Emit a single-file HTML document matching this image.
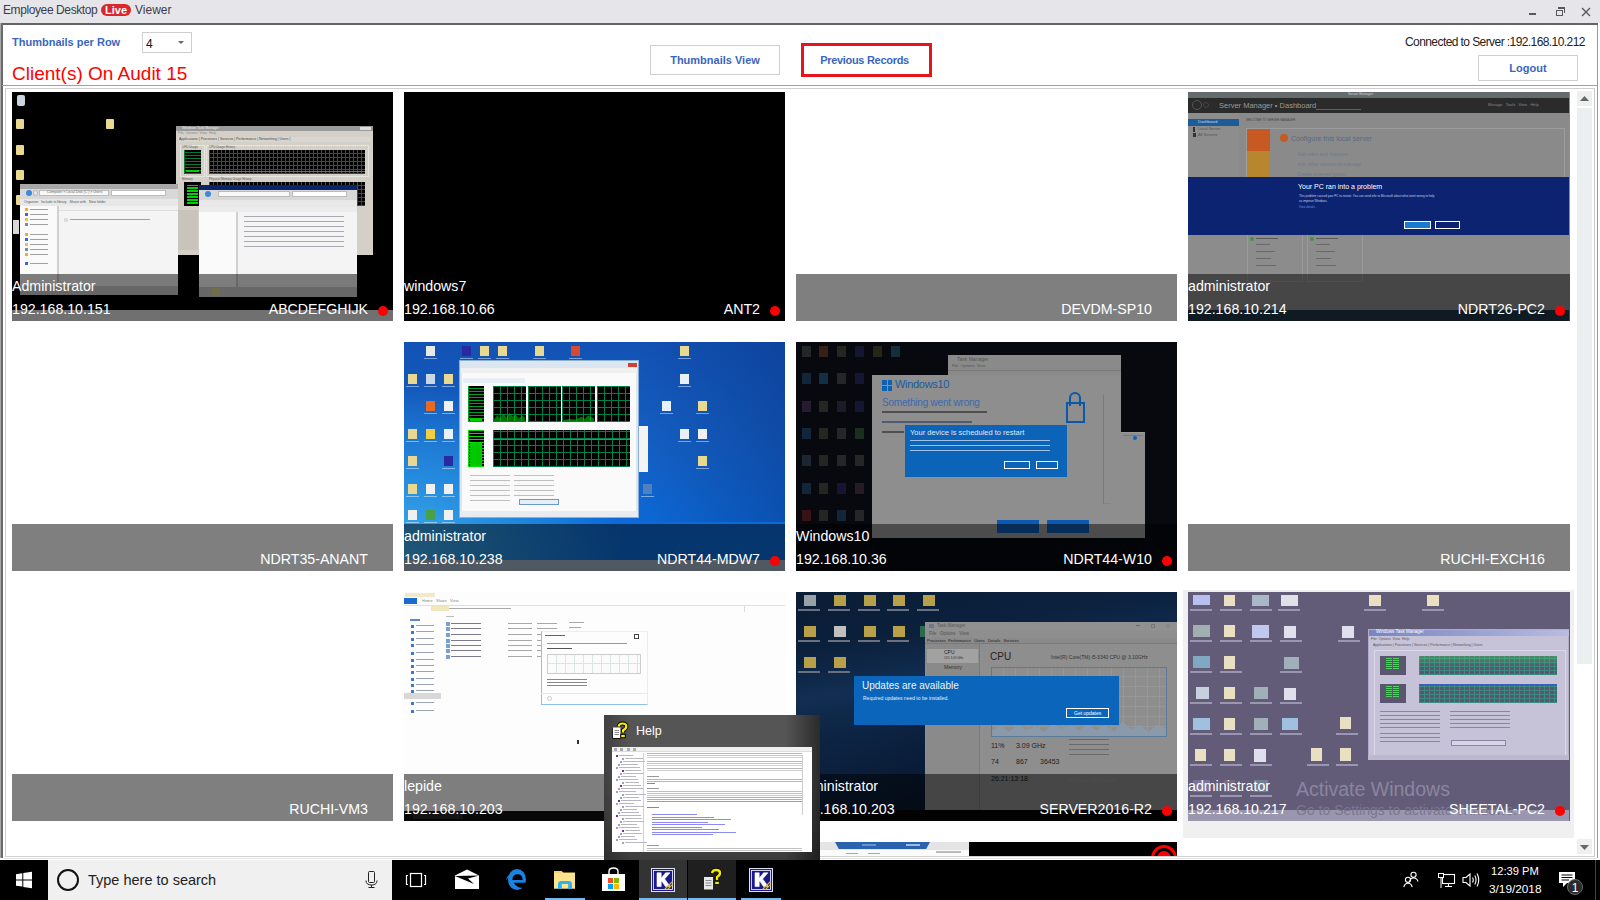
<!DOCTYPE html>
<html><head><meta charset="utf-8">
<style>
*{margin:0;padding:0;box-sizing:border-box}
html,body{width:1600px;height:900px;overflow:hidden;background:#fff;font-family:"Liberation Sans",sans-serif}
.a{position:absolute}
#title{left:0;top:0;width:1600px;height:23px;background:#e6e6ea}
#tline{left:0;top:23px;width:1598px;height:2px;background:#646464}
.ttxt{font-size:12px;letter-spacing:-0.4px;color:#3c3c46;top:3px;white-space:nowrap}
#live{left:101px;top:4px;width:30px;height:12px;border-radius:6px;background:#d9272d;color:#fff;font-weight:bold;font-size:11px;line-height:12px;text-align:center}
.wc{background:#5a5a5a}
#lborder{left:0;top:23px;width:3px;height:835px;background:#6a6a6a;border-left:1px solid #a8a8a8}
#rborder{left:1597px;top:25px;width:1px;height:833px;background:#999}
#bborder{left:3px;top:858px;width:1594px;height:1px;background:#e4e4e4}
.blue{color:#3a66c0;font-weight:bold}
.btn{border:1px solid #cfcfcf;background:#fff;text-align:center}
#hl1{left:2px;top:85px;width:1596px;height:1px;background:#a0a0a0}
#hl2{left:5px;top:88px;width:1590px;height:1px;background:#d0d0d0}
#pl{left:5px;top:88px;width:1px;height:769px;background:#d0d0d0}
#pr{left:1594px;top:88px;width:1px;height:769px;background:#c8c8c8}
#pb{left:5px;top:856px;width:1590px;height:1px;background:#d0d0d0}
.tile{position:absolute;width:381px;height:229px;overflow:hidden;background:#fff}
.band{position:absolute;left:0;top:182px;width:100%;height:47px;background:rgba(0,0,0,.5)}
.lab{position:absolute;color:#fff;font-size:14.2px;white-space:nowrap;line-height:16px}
.u{left:0;top:186px}
.ip{left:0;top:209px}
.hn{right:25px;top:209px}
.dot{position:absolute;right:5px;top:214px;width:10px;height:10px;border-radius:50%;background:#f00}
#taskbar{left:0;top:860px;width:1600px;height:40px;background:#000}
</style></head><body>
<!-- title bar -->
<div id="title" class="a"></div>
<div class="a ttxt" style="left:3px">Employee Desktop</div>
<div id="live" class="a">Live</div>
<div class="a ttxt" style="left:135px;letter-spacing:0">Viewer</div>
<div class="a wc" style="left:1529px;top:13px;width:7px;height:2px"></div>
<div class="a" style="left:1556px;top:10px;width:7px;height:6px;border:1.5px solid #5a5a5a"></div>
<div class="a" style="left:1558px;top:7px;width:7px;height:6px;border-top:2px solid #5a5a5a;border-right:1.5px solid #5a5a5a"></div>
<svg class="a" style="left:1581px;top:7px" width="10" height="10"><path d="M1 1L9 9M9 1L1 9" stroke="#5a5a5a" stroke-width="1.4"/></svg>
<div id="tline" class="a"></div>
<div id="lborder" class="a"></div>
<div id="rborder" class="a"></div>
<div id="bborder" class="a"></div>

<!-- header -->
<div class="a blue" style="left:12px;top:35.5px;font-size:11px;white-space:nowrap">Thumbnails per Row</div>
<div class="a" style="left:142px;top:32px;width:50px;height:21px;border:1px solid #cfcfcf"></div>
<div class="a" style="left:146px;top:37px;font-size:12px;color:#111">4</div>
<svg class="a" style="left:178px;top:41px" width="7" height="4"><path d="M0 0H6L3 3Z" fill="#666"/></svg>
<div class="a" style="left:12px;top:63px;font-size:19px;color:#f00;white-space:nowrap">Client(s) On Audit 15</div>
<div class="a btn blue" style="left:650px;top:45px;width:130px;height:30px;font-size:11px;line-height:28px">Thumbnails View</div>
<div class="a blue" style="left:801px;top:43px;width:131px;height:34px;border:3px solid #e8141c;font-size:11px;letter-spacing:-0.3px;line-height:28px;text-align:center;padding-right:4px">Previous Records</div>
<div class="a" style="left:1405px;top:35px;font-size:12px;letter-spacing:-0.58px;color:#222;white-space:nowrap">Connected to Server :192.168.10.212</div>
<div class="a btn blue" style="left:1478px;top:55px;width:100px;height:26px;font-size:11px;line-height:24px">Logout</div>
<div id="hl1" class="a"></div>
<div id="hl2" class="a"></div>
<div id="pl" class="a"></div>
<div id="pr" class="a"></div>
<div id="pb" class="a"></div>

<!-- scrollbar -->
<div class="a" style="left:1577px;top:91px;width:15px;height:15px;background:#eef0f0"></div>
<svg class="a" style="left:1580px;top:96px" width="10" height="6"><path d="M0 5H9L4.5 0Z" fill="#666"/></svg>
<div class="a" style="left:1577px;top:108px;width:15px;height:556px;background:#eceff0"></div>
<div class="a" style="left:1577px;top:839px;width:15px;height:15px;background:#eef0f0"></div>
<svg class="a" style="left:1580px;top:845px" width="10" height="6"><path d="M0 0H9L4.5 5Z" fill="#666"/></svg>

<!-- selection box -->
<div class="a" style="left:1183px;top:590px;width:391px;height:248px;background:#f0f0f0"></div>

<!-- TILES -->
<div class="tile" style="left:12px;top:92px;background:#000"><div class="a" style="left:5px;top:3px;width:8px;height:11px;background:#c8d4e0;border-radius:2px"></div><div class="a" style="left:4px;top:27px;width:8px;height:10px;background:#e8d890;border-radius:1px"></div><div class="a" style="left:4px;top:53px;width:8px;height:10px;background:#e8d890;border-radius:1px"></div><div class="a" style="left:4px;top:78px;width:8px;height:10px;background:#e8d890;border-radius:1px"></div><div class="a" style="left:4px;top:103px;width:8px;height:10px;background:#e8d890;border-radius:1px"></div><div class="a" style="left:94px;top:27px;width:8px;height:10px;background:#e8d890;border-radius:1px"></div><div class="a" style="left:1px;top:128px;width:6px;height:14px;background:#d8d8d8;"></div><div class="a" style="left:164px;top:34px;width:197px;height:129px;background:#d4d0c8;"></div><div class="a" style="left:164px;top:34px;width:197px;height:5px;background:#9a9a9a;"></div><div class="a" style="left:170px;top:35px;font-size:3.5px;color:#eee;white-space:nowrap;line-height:1;">Windows Task Manager</div><div class="a" style="left:348px;top:35px;width:11px;height:3px;background:#ddd;"></div><div class="a" style="left:166px;top:40px;font-size:3.5px;color:#888;white-space:nowrap;line-height:1;">File&nbsp;&nbsp;Options&nbsp;&nbsp;View&nbsp;&nbsp;Help</div><div class="a" style="left:166px;top:45px;width:193px;height:5px;background:#d8d6d0;"></div><div class="a" style="left:167px;top:46px;font-size:3.5px;color:#444;white-space:nowrap;line-height:1;">Applications | Processes | Services | Performance | Networking | Users |</div><div class="a" style="left:168px;top:53px;width:25px;height:32px;background:transparent;border:1px solid #e8e6e0"></div><div class="a" style="left:194px;top:53px;width:163px;height:32px;background:transparent;border:1px solid #e8e6e0"></div><div class="a" style="left:170px;top:54px;font-size:3px;color:#555;white-space:nowrap;line-height:1;">CPU Usage</div><div class="a" style="left:197px;top:54px;font-size:3px;color:#555;white-space:nowrap;line-height:1;">CPU Usage History</div><div class="a" style="left:170px;top:86px;font-size:3px;color:#555;white-space:nowrap;line-height:1;">Memory</div><div class="a" style="left:197px;top:86px;font-size:3px;color:#555;white-space:nowrap;line-height:1;">Physical Memory Usage History</div><div class="a" style="left:172px;top:58px;width:17px;height:24px;background:#000;background-image:repeating-linear-gradient(90deg,#007a30 0 1px,transparent 1px 17px),repeating-linear-gradient(0deg,#007a30 0 1px,transparent 1px 3px)"></div><div class="a" style="left:174px;top:78px;width:13px;height:2px;background:#00d000;"></div><div class="a" style="left:197px;top:58px;width:156px;height:24px;background:#000;background-image:repeating-linear-gradient(90deg,#007038 0 1px,transparent 1px 4px),repeating-linear-gradient(0deg,#007038 0 1px,transparent 1px 4px)"></div><div class="a" style="left:197px;top:79px;width:156px;height:1px;background:#00c000;"></div><div class="a" style="left:172px;top:90px;width:17px;height:24px;background:#000;"></div><div class="a" style="left:175px;top:93px;width:11px;height:19px;background:#00d000;background-image:repeating-linear-gradient(0deg,#00d000 0 2px,#000 2px 3px)"></div><div class="a" style="left:197px;top:90px;width:156px;height:24px;background:#000;background-image:repeating-linear-gradient(90deg,#007038 0 1px,transparent 1px 4px),repeating-linear-gradient(0deg,#007038 0 1px,transparent 1px 4px)"></div><div class="a" style="left:166px;top:118px;width:20px;height:40px;background:#c8c4bc;"></div><div class="a" style="left:8px;top:92px;width:158px;height:111px;background:#f4f4f4;"></div><div class="a" style="left:8px;top:92px;width:158px;height:5px;background:#a8a8a8;"></div><div class="a" style="left:8px;top:97px;width:158px;height:10px;background:#d8d8d8;"></div><div class="a" style="left:14px;top:98px;width:6px;height:6px;background:#3a8ad8;border-radius:50%"></div><div class="a" style="left:21px;top:98px;width:5px;height:6px;background:#e8e8e8;border-radius:50%;border:1px solid #bbb"></div><div class="a" style="left:27px;top:98px;width:70px;height:6px;background:#f8f8f8;border:1px solid #bbb"></div><div class="a" style="left:35px;top:99px;font-size:3.5px;color:#666;white-space:nowrap;line-height:1;">Computer &gt; Local Disk (C:) &gt; Users</div><div class="a" style="left:99px;top:98px;width:55px;height:6px;background:#fff;border:1px solid #bbb"></div><div class="a" style="left:8px;top:107px;width:158px;height:7px;background:#e8e8e8;"></div><div class="a" style="left:12px;top:109px;font-size:3.5px;color:#555;white-space:nowrap;line-height:1;">Organize&nbsp;&nbsp;&nbsp;Include in library&nbsp;&nbsp;&nbsp;Share with&nbsp;&nbsp;&nbsp;New folder</div><div class="a" style="left:8px;top:114px;width:37px;height:80px;background:#fafafa;"></div><div class="a" style="left:45px;top:114px;width:2px;height:80px;background:#d0d0d0;"></div><div class="a" style="left:47px;top:114px;width:119px;height:5px;background:#f0f0f0;border-bottom:1px solid #ddd"></div><div class="a" style="left:13px;top:116px;width:3px;height:3px;background:#e8b030;"></div><div class="a" style="left:18px;top:117px;width:18px;height:1px;background:#a0a0a0;"></div><div class="a" style="left:13px;top:121px;width:3px;height:3px;background:#3a6ad0;"></div><div class="a" style="left:18px;top:122px;width:18px;height:1px;background:#a0a0a0;"></div><div class="a" style="left:13px;top:126px;width:3px;height:3px;background:#e0c060;"></div><div class="a" style="left:18px;top:127px;width:18px;height:1px;background:#a0a0a0;"></div><div class="a" style="left:13px;top:131px;width:3px;height:3px;background:#7a8aa0;"></div><div class="a" style="left:18px;top:132px;width:18px;height:1px;background:#a0a0a0;"></div><div class="a" style="left:13px;top:141px;width:3px;height:3px;background:#e8b030;"></div><div class="a" style="left:18px;top:142px;width:18px;height:1px;background:#a0a0a0;"></div><div class="a" style="left:13px;top:146px;width:3px;height:3px;background:#3a6ad0;"></div><div class="a" style="left:18px;top:147px;width:18px;height:1px;background:#a0a0a0;"></div><div class="a" style="left:13px;top:151px;width:3px;height:3px;background:#e0c060;"></div><div class="a" style="left:18px;top:152px;width:18px;height:1px;background:#a0a0a0;"></div><div class="a" style="left:13px;top:156px;width:3px;height:3px;background:#7a8aa0;"></div><div class="a" style="left:18px;top:157px;width:18px;height:1px;background:#a0a0a0;"></div><div class="a" style="left:13px;top:161px;width:3px;height:3px;background:#e8b030;"></div><div class="a" style="left:18px;top:162px;width:18px;height:1px;background:#a0a0a0;"></div><div class="a" style="left:13px;top:170px;width:3px;height:3px;background:#3a6ad0;"></div><div class="a" style="left:18px;top:171px;width:18px;height:1px;background:#a0a0a0;"></div><div class="a" style="left:52px;top:126px;width:4px;height:4px;background:#ddd;"></div><div class="a" style="left:58px;top:127px;width:60px;height:1px;background:#a0a0a0;"></div><div class="a" style="left:118px;top:127px;width:20px;height:1px;background:#a0a0a0;"></div><div class="a" style="left:8px;top:194px;width:158px;height:9px;background:#cfcfcf;"></div><div class="a" style="left:187px;top:93px;width:158px;height:112px;background:#f4f4f4;"></div><div class="a" style="left:187px;top:93px;width:158px;height:5px;background:#0a246a;"></div><div class="a" style="left:187px;top:98px;width:158px;height:10px;background:#d8d8d8;"></div><div class="a" style="left:193px;top:99px;width:6px;height:6px;background:#3a8ad8;border-radius:50%"></div><div class="a" style="left:206px;top:99px;width:72px;height:6px;background:#f8f8f8;border:1px solid #bbb"></div><div class="a" style="left:280px;top:99px;width:55px;height:6px;background:#fff;border:1px solid #bbb"></div><div class="a" style="left:187px;top:108px;width:158px;height:7px;background:#e8e8e8;"></div><div class="a" style="left:187px;top:115px;width:37px;height:80px;background:#fafafa;"></div><div class="a" style="left:224px;top:115px;width:2px;height:80px;background:#d0d0d0;"></div><div class="a" style="left:187px;top:115px;width:158px;height:5px;background:#ececec;"></div><div class="a" style="left:232px;top:124px;width:100px;height:1px;background:#a8a8b0;"></div><div class="a" style="left:232px;top:129px;width:100px;height:1px;background:#a8a8b0;"></div><div class="a" style="left:232px;top:134px;width:100px;height:1px;background:#a8a8b0;"></div><div class="a" style="left:232px;top:139px;width:100px;height:1px;background:#a8a8b0;"></div><div class="a" style="left:232px;top:144px;width:100px;height:1px;background:#a8a8b0;"></div><div class="a" style="left:232px;top:149px;width:100px;height:1px;background:#a8a8b0;"></div><div class="a" style="left:232px;top:154px;width:100px;height:1px;background:#a8a8b0;"></div><div class="a" style="left:187px;top:195px;width:158px;height:10px;background:#cfcfcf;"></div><div class="a" style="left:200px;top:196px;width:8px;height:8px;background:#e8d890;"></div><div class="a" style="left:0px;top:218px;width:381px;height:11px;background:#e0e0e0;"></div><div class="band"></div><div class="lab u">Administrator</div><div class="lab ip">192.168.10.151</div><div class="lab hn">ABCDEFGHIJK</div><div class="dot"></div></div>
<div class="tile" style="left:404px;top:92px;background:#000"><div class="band"></div><div class="lab u">windows7</div><div class="lab ip">192.168.10.66</div><div class="lab hn">ANT2</div><div class="dot"></div></div>
<div class="tile" style="left:796px;top:92px;background:#fff"><div class="band"></div><div class="lab hn">DEVDM-SP10</div></div>
<div class="tile" style="left:1188px;top:92px;width:382px;background:#8c8c8c"><div class="a" style="left:0px;top:0px;width:381px;height:6px;background:#646c6e;"></div><div class="a" style="left:0px;top:6px;width:381px;height:15px;background:#2b2b2b;"></div><div class="a" style="left:4px;top:8px;width:10px;height:10px;background:transparent;border:1px solid #555;border-radius:50%"></div><div class="a" style="left:15px;top:10px;width:6px;height:6px;background:transparent;border:1px solid #444;border-radius:50%"></div><div class="a" style="left:31px;top:10px;font-size:7.5px;color:#9a9a9a;white-space:nowrap;line-height:1;">Server Manager • Dashboard</div><div class="a" style="left:300px;top:11px;font-size:4px;color:#888;white-space:nowrap;line-height:1;">Manage&nbsp;&nbsp;&nbsp;Tools&nbsp;&nbsp;&nbsp;View&nbsp;&nbsp;&nbsp;Help</div><div class="a" style="left:128px;top:17px;width:45px;height:1px;background:#3a6a90;"></div><div class="a" style="left:0px;top:21px;width:51px;height:122px;background:#8d8d8d;"></div><div class="a" style="left:51px;top:21px;width:330px;height:122px;background:#8a8a8a;"></div><div class="a" style="left:0px;top:27px;width:51px;height:7px;background:#1d5c98;"></div><div class="a" style="left:10px;top:28px;font-size:4px;color:#c8d8e8;white-space:nowrap;line-height:1;">Dashboard</div><div class="a" style="left:10px;top:35px;font-size:4px;color:#555;white-space:nowrap;line-height:1;">Local Server</div><div class="a" style="left:10px;top:41px;font-size:4px;color:#555;white-space:nowrap;line-height:1;">All Servers</div><div class="a" style="left:5px;top:35px;width:2px;height:5px;background:#333;"></div><div class="a" style="left:5px;top:41px;width:3px;height:4px;background:#333;"></div><div class="a" style="left:58px;top:27px;font-size:3px;color:#444;white-space:nowrap;line-height:1;">WELCOME TO SERVER MANAGER</div><div class="a" style="left:58px;top:36px;width:319px;height:1px;background:#9c9c9c;"></div><div class="a" style="left:58px;top:36px;width:24px;height:23px;background:#c65a22;"></div><div class="a" style="left:58px;top:59px;width:24px;height:26px;background:#b8862e;"></div><div class="a" style="left:92px;top:42px;width:8px;height:8px;background:#c65a22;border-radius:50%"></div><div class="a" style="left:103px;top:43px;font-size:7px;color:#5a6a80;white-space:nowrap;line-height:1;">Configure this local server</div><div class="a" style="left:109px;top:60px;font-size:5px;color:#6a7a90;white-space:nowrap;line-height:1;">Add roles and features</div><div class="a" style="left:109px;top:70px;font-size:5px;color:#6a7a90;white-space:nowrap;line-height:1;">Add other servers to manage</div><div class="a" style="left:109px;top:80px;font-size:5px;color:#6a7a90;white-space:nowrap;line-height:1;">Create a server group</div><div class="a" style="left:0px;top:85px;width:381px;height:58px;background:#0b2370;"></div><div class="a" style="left:110px;top:91px;font-size:7px;color:#fff;white-space:nowrap;line-height:1;">Your PC ran into a problem</div><div class="a" style="left:111px;top:103px;font-size:3px;color:#c8d0e8;white-space:nowrap;line-height:1;">This problem caused your PC to restart. You can send info to Microsoft about what went wrong to help</div><div class="a" style="left:111px;top:108px;font-size:3px;color:#c8d0e8;white-space:nowrap;line-height:1;">us improve Windows.</div><div class="a" style="left:111px;top:114px;font-size:3px;color:#6a90e0;white-space:nowrap;line-height:1;">View details</div><div class="a" style="left:216px;top:129px;width:27px;height:8px;background:#1a7ad0;border:1px solid #fff"></div><div class="a" style="left:247px;top:129px;width:25px;height:8px;background:transparent;border:1px solid #fff"></div><div class="a" style="left:59px;top:143px;width:56px;height:47px;background:transparent;border:1px solid #9a9a9a;border-top:none"></div><div class="a" style="left:119px;top:143px;width:56px;height:47px;background:transparent;border:1px solid #9a9a9a;border-top:none"></div><div class="a" style="left:62px;top:145px;width:4px;height:4px;background:#3a9a3a;border-radius:50%"></div><div class="a" style="left:68px;top:146px;width:22px;height:1px;background:#5a5a5a;"></div><div class="a" style="left:68px;top:152px;width:14px;height:1px;background:#6a6a6a;"></div><div class="a" style="left:68px;top:159px;width:19px;height:1px;background:#6a6a6a;"></div><div class="a" style="left:68px;top:166px;width:15px;height:1px;background:#6a6a6a;"></div><div class="a" style="left:68px;top:173px;width:20px;height:1px;background:#6a6a6a;"></div><div class="a" style="left:122px;top:145px;width:4px;height:4px;background:#3a9a3a;border-radius:50%"></div><div class="a" style="left:128px;top:146px;width:22px;height:1px;background:#5a5a5a;"></div><div class="a" style="left:128px;top:152px;width:14px;height:1px;background:#6a6a6a;"></div><div class="a" style="left:128px;top:159px;width:19px;height:1px;background:#6a6a6a;"></div><div class="a" style="left:128px;top:166px;width:15px;height:1px;background:#6a6a6a;"></div><div class="a" style="left:128px;top:173px;width:20px;height:1px;background:#6a6a6a;"></div><div class="a" style="left:58px;top:36px;width:319px;height:49px;background:transparent;border:1px solid #9c9c9c;border-bottom:none"></div><div class="a" style="left:160px;top:1px;font-size:3.5px;color:#cfd4d6;white-space:nowrap;line-height:1;">Server Manager</div><div class="a" style="left:0px;top:218px;width:381px;height:11px;background:#1e3444;"></div><div class="band"></div><div class="lab u">administrator</div><div class="lab ip">192.168.10.214</div><div class="lab hn">NDRT26-PC2</div><div class="dot"></div></div>
<div class="tile" style="left:12px;top:342px;background:#fff"><div class="band"></div><div class="lab hn">NDRT35-ANANT</div></div>
<div class="tile" style="left:404px;top:342px;background:#1f6bd0"><div class="a" style="left:0px;top:0px;width:381px;height:229px;background:#1a62c8;background:radial-gradient(ellipse 220px 170px at 0px 215px,#40b0f0 0%,#2890e0 40%,transparent 100%),linear-gradient(180deg,#1252b4 0%,#1460c4 45%,#0c6ad8 80%,#0a70e0 100%)"></div><div class="a" style="left:230px;top:0px;width:151px;height:180px;background:transparent;background:linear-gradient(90deg,transparent,rgba(8,50,130,.45) 100%)"></div><div class="a" style="left:22px;top:4px;width:9px;height:10px;background:#e8e8e8;"></div><div class="a" style="left:20px;top:16px;width:13px;height:1px;background:rgba(255,255,255,.45);"></div><div class="a" style="left:58px;top:4px;width:9px;height:10px;background:#2a2aa0;"></div><div class="a" style="left:56px;top:16px;width:13px;height:1px;background:rgba(255,255,255,.45);"></div><div class="a" style="left:76px;top:4px;width:9px;height:10px;background:#e8d890;"></div><div class="a" style="left:74px;top:16px;width:13px;height:1px;background:rgba(255,255,255,.45);"></div><div class="a" style="left:94px;top:4px;width:9px;height:10px;background:#e8d890;"></div><div class="a" style="left:92px;top:16px;width:13px;height:1px;background:rgba(255,255,255,.45);"></div><div class="a" style="left:131px;top:4px;width:9px;height:10px;background:#e8d890;"></div><div class="a" style="left:129px;top:16px;width:13px;height:1px;background:rgba(255,255,255,.45);"></div><div class="a" style="left:167px;top:4px;width:9px;height:10px;background:#d84a30;"></div><div class="a" style="left:165px;top:16px;width:13px;height:1px;background:rgba(255,255,255,.45);"></div><div class="a" style="left:276px;top:4px;width:9px;height:10px;background:#e8d890;"></div><div class="a" style="left:274px;top:16px;width:13px;height:1px;background:rgba(255,255,255,.45);"></div><div class="a" style="left:4px;top:32px;width:9px;height:10px;background:#e8d890;"></div><div class="a" style="left:2px;top:44px;width:13px;height:1px;background:rgba(255,255,255,.45);"></div><div class="a" style="left:22px;top:32px;width:9px;height:10px;background:#c8d8e8;"></div><div class="a" style="left:20px;top:44px;width:13px;height:1px;background:rgba(255,255,255,.45);"></div><div class="a" style="left:40px;top:32px;width:9px;height:10px;background:#e8d890;"></div><div class="a" style="left:38px;top:44px;width:13px;height:1px;background:rgba(255,255,255,.45);"></div><div class="a" style="left:276px;top:32px;width:9px;height:10px;background:#e8f0f8;"></div><div class="a" style="left:274px;top:44px;width:13px;height:1px;background:rgba(255,255,255,.45);"></div><div class="a" style="left:22px;top:59px;width:9px;height:10px;background:#e86a20;"></div><div class="a" style="left:20px;top:71px;width:13px;height:1px;background:rgba(255,255,255,.45);"></div><div class="a" style="left:40px;top:59px;width:9px;height:10px;background:#f0f0f0;"></div><div class="a" style="left:38px;top:71px;width:13px;height:1px;background:rgba(255,255,255,.45);"></div><div class="a" style="left:258px;top:59px;width:9px;height:10px;background:#e8f0f8;"></div><div class="a" style="left:256px;top:71px;width:13px;height:1px;background:rgba(255,255,255,.45);"></div><div class="a" style="left:294px;top:59px;width:9px;height:10px;background:#e8d890;"></div><div class="a" style="left:292px;top:71px;width:13px;height:1px;background:rgba(255,255,255,.45);"></div><div class="a" style="left:4px;top:87px;width:9px;height:10px;background:#e8d890;"></div><div class="a" style="left:2px;top:99px;width:13px;height:1px;background:rgba(255,255,255,.45);"></div><div class="a" style="left:22px;top:87px;width:9px;height:10px;background:#f0d040;"></div><div class="a" style="left:20px;top:99px;width:13px;height:1px;background:rgba(255,255,255,.45);"></div><div class="a" style="left:40px;top:87px;width:9px;height:10px;background:#e8f0f8;"></div><div class="a" style="left:38px;top:99px;width:13px;height:1px;background:rgba(255,255,255,.45);"></div><div class="a" style="left:276px;top:87px;width:9px;height:10px;background:#e8f0f8;"></div><div class="a" style="left:274px;top:99px;width:13px;height:1px;background:rgba(255,255,255,.45);"></div><div class="a" style="left:294px;top:87px;width:9px;height:10px;background:#f0f0f0;"></div><div class="a" style="left:292px;top:99px;width:13px;height:1px;background:rgba(255,255,255,.45);"></div><div class="a" style="left:4px;top:114px;width:9px;height:10px;background:#e8d890;"></div><div class="a" style="left:2px;top:126px;width:13px;height:1px;background:rgba(255,255,255,.45);"></div><div class="a" style="left:40px;top:114px;width:9px;height:10px;background:#2a2aa0;"></div><div class="a" style="left:38px;top:126px;width:13px;height:1px;background:rgba(255,255,255,.45);"></div><div class="a" style="left:294px;top:114px;width:9px;height:10px;background:#e8d890;"></div><div class="a" style="left:292px;top:126px;width:13px;height:1px;background:rgba(255,255,255,.45);"></div><div class="a" style="left:4px;top:142px;width:9px;height:10px;background:#e8d890;"></div><div class="a" style="left:2px;top:154px;width:13px;height:1px;background:rgba(255,255,255,.45);"></div><div class="a" style="left:22px;top:142px;width:9px;height:10px;background:#f0f0f0;"></div><div class="a" style="left:20px;top:154px;width:13px;height:1px;background:rgba(255,255,255,.45);"></div><div class="a" style="left:40px;top:142px;width:9px;height:10px;background:#f0f0f0;"></div><div class="a" style="left:38px;top:154px;width:13px;height:1px;background:rgba(255,255,255,.45);"></div><div class="a" style="left:239px;top:142px;width:9px;height:10px;background:#5080c0;"></div><div class="a" style="left:237px;top:154px;width:13px;height:1px;background:rgba(255,255,255,.45);"></div><div class="a" style="left:4px;top:168px;width:9px;height:10px;background:#f0f0f0;"></div><div class="a" style="left:2px;top:180px;width:13px;height:1px;background:rgba(255,255,255,.45);"></div><div class="a" style="left:22px;top:168px;width:9px;height:10px;background:#48a048;"></div><div class="a" style="left:20px;top:180px;width:13px;height:1px;background:rgba(255,255,255,.45);"></div><div class="a" style="left:40px;top:168px;width:9px;height:10px;background:#f0f0f0;"></div><div class="a" style="left:38px;top:180px;width:13px;height:1px;background:rgba(255,255,255,.45);"></div><div class="a" style="left:55px;top:18px;width:180px;height:158px;background:#dce6f0;border:1px solid #8ab0d8"></div><div class="a" style="left:57px;top:26px;width:176px;height:5px;background:#f0f0f0;"></div><div class="a" style="left:224px;top:21px;width:9px;height:4px;background:#d04030;"></div><div class="a" style="left:58px;top:31px;width:174px;height:140px;background:#fafafa;"></div><div class="a" style="left:59px;top:36px;width:62px;height:5px;background:#e8eef6;"></div><div class="a" style="left:64px;top:44px;width:16px;height:36px;background:#000;background-image:repeating-linear-gradient(90deg,#00a020 0 1px,transparent 1px 16px),repeating-linear-gradient(0deg,#00a020 0 1px,transparent 1px 3px)"></div><div class="a" style="left:66px;top:76px;width:12px;height:3px;background:#00d000;"></div><div class="a" style="left:89px;top:44px;width:33px;height:36px;background:#000;background-image:repeating-linear-gradient(90deg,#00804a 0 1px,transparent 1px 7px),repeating-linear-gradient(0deg,#00804a 0 1px,transparent 1px 7px)"></div><div class="a" style="left:124px;top:44px;width:33px;height:36px;background:#000;background-image:repeating-linear-gradient(90deg,#00804a 0 1px,transparent 1px 7px),repeating-linear-gradient(0deg,#00804a 0 1px,transparent 1px 7px)"></div><div class="a" style="left:158px;top:44px;width:33px;height:36px;background:#000;background-image:repeating-linear-gradient(90deg,#00804a 0 1px,transparent 1px 7px),repeating-linear-gradient(0deg,#00804a 0 1px,transparent 1px 7px)"></div><div class="a" style="left:193px;top:44px;width:33px;height:36px;background:#000;background-image:repeating-linear-gradient(90deg,#00804a 0 1px,transparent 1px 7px),repeating-linear-gradient(0deg,#00804a 0 1px,transparent 1px 7px)"></div><div class="a" style="left:90px;top:70px;width:31px;height:9px;background:#00c000;clip-path:polygon(0 80%,10% 40%,20% 70%,30% 20%,40% 60%,50% 10%,60% 50%,70% 30%,80% 70%,90% 40%,100% 60%,100% 100%,0 100%);opacity:.6"></div><div class="a" style="left:159px;top:72px;width:31px;height:7px;background:#00c000;clip-path:polygon(0 90%,20% 70%,40% 80%,60% 40%,70% 70%,80% 20%,100% 60%,100% 100%,0 100%);opacity:.6"></div><div class="a" style="left:64px;top:88px;width:16px;height:37px;background:#000;background-image:repeating-linear-gradient(90deg,#00e000 0 1px,transparent 1px 16px),repeating-linear-gradient(0deg,#00e000 0 1px,transparent 1px 3px)"></div><div class="a" style="left:66px;top:101px;width:12px;height:23px;background:#00c800;"></div><div class="a" style="left:89px;top:88px;width:137px;height:37px;background:#000;background-image:repeating-linear-gradient(90deg,#00804a 0 1px,transparent 1px 7px),repeating-linear-gradient(0deg,#00804a 0 1px,transparent 1px 7px)"></div><div class="a" style="left:89px;top:97px;width:137px;height:1px;background:#2080ff;"></div><div class="a" style="left:66px;top:133px;width:40px;height:1px;background:#c0c0c0;"></div><div class="a" style="left:66px;top:138px;width:40px;height:1px;background:#c0c0c0;"></div><div class="a" style="left:66px;top:143px;width:40px;height:1px;background:#c0c0c0;"></div><div class="a" style="left:66px;top:148px;width:40px;height:1px;background:#c0c0c0;"></div><div class="a" style="left:66px;top:153px;width:40px;height:1px;background:#c0c0c0;"></div><div class="a" style="left:66px;top:158px;width:40px;height:1px;background:#c0c0c0;"></div><div class="a" style="left:110px;top:133px;width:40px;height:1px;background:#c0c0c0;"></div><div class="a" style="left:110px;top:138px;width:40px;height:1px;background:#c0c0c0;"></div><div class="a" style="left:110px;top:143px;width:40px;height:1px;background:#c0c0c0;"></div><div class="a" style="left:110px;top:148px;width:40px;height:1px;background:#c0c0c0;"></div><div class="a" style="left:110px;top:153px;width:40px;height:1px;background:#c0c0c0;"></div><div class="a" style="left:115px;top:157px;width:40px;height:6px;background:#e8eef6;border:1px solid #6a9ad0"></div><div class="a" style="left:56px;top:169px;width:178px;height:6px;background:#e8ecf0;"></div><div class="a" style="left:235px;top:84px;width:9px;height:46px;background:#f4f4f4;"></div><div class="a" style="left:0px;top:218px;width:381px;height:11px;background:#a0b0c4;"></div><div class="band"></div><div class="lab u">administrator</div><div class="lab ip">192.168.10.238</div><div class="lab hn">NDRT44-MDW7</div><div class="dot"></div></div>
<div class="tile" style="left:796px;top:342px;background:#080c14"><div class="a" style="left:0px;top:0px;width:381px;height:229px;background:#07090e;"></div><div class="a" style="left:6px;top:4px;width:9px;height:11px;background:#3a3a3a;opacity:.6"></div><div class="a" style="left:23px;top:4px;width:9px;height:11px;background:#5a3020;opacity:.6"></div><div class="a" style="left:41px;top:4px;width:9px;height:11px;background:#3a3a30;opacity:.6"></div><div class="a" style="left:59px;top:4px;width:9px;height:11px;background:#20204a;opacity:.6"></div><div class="a" style="left:77px;top:4px;width:9px;height:11px;background:#3a3a20;opacity:.6"></div><div class="a" style="left:95px;top:4px;width:9px;height:11px;background:#1a4a5a;opacity:.6"></div><div class="a" style="left:6px;top:31px;width:9px;height:11px;background:#1a3a5a;opacity:.6"></div><div class="a" style="left:23px;top:31px;width:9px;height:11px;background:#1a4a6a;opacity:.6"></div><div class="a" style="left:41px;top:31px;width:9px;height:11px;background:#3a3a3a;opacity:.6"></div><div class="a" style="left:59px;top:31px;width:9px;height:11px;background:#20204a;opacity:.6"></div><div class="a" style="left:6px;top:59px;width:9px;height:11px;background:#3a2a4a;opacity:.6"></div><div class="a" style="left:23px;top:59px;width:9px;height:11px;background:#3a3a30;opacity:.6"></div><div class="a" style="left:41px;top:59px;width:9px;height:11px;background:#2a2a3a;opacity:.6"></div><div class="a" style="left:59px;top:59px;width:9px;height:11px;background:#20204a;opacity:.6"></div><div class="a" style="left:6px;top:86px;width:9px;height:11px;background:#1a3a5a;opacity:.6"></div><div class="a" style="left:23px;top:86px;width:9px;height:11px;background:#3a3a30;opacity:.6"></div><div class="a" style="left:41px;top:86px;width:9px;height:11px;background:#3a3a3a;opacity:.6"></div><div class="a" style="left:59px;top:86px;width:9px;height:11px;background:#2a4a2a;opacity:.6"></div><div class="a" style="left:6px;top:113px;width:9px;height:11px;background:#2a3a4a;opacity:.6"></div><div class="a" style="left:23px;top:113px;width:9px;height:11px;background:#3a3a30;opacity:.6"></div><div class="a" style="left:41px;top:113px;width:9px;height:11px;background:#3a3a3a;opacity:.6"></div><div class="a" style="left:59px;top:113px;width:9px;height:11px;background:#3a3a3a;opacity:.6"></div><div class="a" style="left:6px;top:141px;width:9px;height:11px;background:#1a3a5a;opacity:.6"></div><div class="a" style="left:23px;top:141px;width:9px;height:11px;background:#3a3a30;opacity:.6"></div><div class="a" style="left:41px;top:141px;width:9px;height:11px;background:#20204a;opacity:.6"></div><div class="a" style="left:59px;top:141px;width:9px;height:11px;background:#3a2a3a;opacity:.6"></div><div class="a" style="left:6px;top:168px;width:9px;height:11px;background:#5a1a1a;opacity:.6"></div><div class="a" style="left:23px;top:168px;width:9px;height:11px;background:#3a3a30;opacity:.6"></div><div class="a" style="left:41px;top:168px;width:9px;height:11px;background:#1a3a5a;opacity:.6"></div><div class="a" style="left:59px;top:168px;width:9px;height:11px;background:#3a3a3a;opacity:.6"></div><div class="a" style="left:152px;top:13px;width:173px;height:151px;background:#8a8a8a;"></div><div class="a" style="left:152px;top:28px;width:173px;height:1px;background:#7a7a7a;"></div><div class="a" style="left:161px;top:15px;font-size:5px;color:#555;white-space:nowrap;line-height:1;">Task Manager</div><div class="a" style="left:156px;top:22px;font-size:4px;color:#555;white-space:nowrap;line-height:1;">File&nbsp;&nbsp;Options&nbsp;&nbsp;View</div><div class="a" style="left:324px;top:91px;width:25px;height:105px;background:#8c8c8c;"></div><div class="a" style="left:76px;top:33px;width:273px;height:149px;background:#8e8e8e;"></div><div class="a" style="left:86px;top:38px;width:10px;height:11px;background:#1060b0;"></div><div class="a" style="left:91px;top:38px;width:1px;height:11px;background:#8e8e8e;"></div><div class="a" style="left:86px;top:43px;width:10px;height:1px;background:#8e8e8e;"></div><div class="a" style="left:99px;top:37px;font-size:11px;color:#1a5aa0;white-space:nowrap;line-height:1;letter-spacing:-.3px">Windows10</div><div class="a" style="left:86px;top:56px;font-size:10px;color:#3a6ab0;white-space:nowrap;line-height:1;letter-spacing:-.2px">Something went wrong</div><div class="a" style="left:86px;top:69px;width:105px;height:2px;background:#404040;opacity:.8"></div><div class="a" style="left:86px;top:79px;width:90px;height:2px;background:#505a70;"></div><div class="a" style="left:86px;top:89px;width:22px;height:2px;background:#505050;"></div><div class="a" style="left:270px;top:60px;width:19px;height:21px;background:transparent;border:2px solid #0a58a8"></div><div class="a" style="left:273px;top:50px;width:12px;height:14px;background:transparent;border:2px solid #0a58a8;border-bottom:none;border-radius:6px 6px 0 0"></div><div class="a" style="left:307px;top:53px;width:8px;height:109px;background:transparent;border-left:1px solid #6a8a4a;border-bottom:1px solid #6a9a4a"></div><div class="a" style="left:325px;top:33px;width:25px;height:57px;background:#07090e;"></div><div class="a" style="left:325px;top:90px;width:24px;height:1px;background:#9a9a9a;"></div><div class="a" style="left:327px;top:93px;width:20px;height:1px;background:#7a7a7a;"></div><div class="a" style="left:337px;top:94px;width:4px;height:4px;background:#1060c0;border-radius:50%"></div><div class="a" style="left:76px;top:182px;width:273px;height:14px;background:#989898;"></div><div class="a" style="left:201px;top:178px;width:42px;height:13px;background:#0b5ab0;"></div><div class="a" style="left:251px;top:178px;width:42px;height:13px;background:#0b5ab0;"></div><div class="a" style="left:109px;top:83px;width:162px;height:52px;background:#0b64b8;"></div><div class="a" style="left:114px;top:87px;font-size:7.5px;color:#e0e8f0;white-space:nowrap;line-height:1;">Your device is scheduled to restart</div><div class="a" style="left:114px;top:98px;width:140px;height:1px;background:#a0c0e8;"></div><div class="a" style="left:114px;top:103px;width:140px;height:1px;background:#a0c0e8;"></div><div class="a" style="left:114px;top:108px;width:140px;height:1px;background:#a0c0e8;"></div><div class="a" style="left:208px;top:119px;width:26px;height:8px;background:transparent;border:1px solid #fff"></div><div class="a" style="left:240px;top:119px;width:22px;height:8px;background:transparent;border:1px solid #fff"></div><div class="band"></div><div class="lab u">Windows10</div><div class="lab ip">192.168.10.36</div><div class="lab hn">NDRT44-W10</div><div class="dot"></div></div>
<div class="tile" style="left:1188px;top:342px;width:382px;background:#fff"><div class="band"></div><div class="lab hn">RUCHI-EXCH16</div></div>
<div class="tile" style="left:12px;top:592px;background:#fff"><div class="band"></div><div class="lab hn">RUCHI-VM3</div></div>
<div class="tile" style="left:404px;top:592px;background:#fff"><div class="a" style="left:0px;top:0px;width:381px;height:229px;background:#fdfdfd;"></div><div class="a" style="left:1px;top:1px;width:30px;height:4px;background:#e8d890;opacity:.5"></div><div class="a" style="left:0px;top:6px;width:13px;height:6px;background:#1a6ad0;"></div><div class="a" style="left:18px;top:7px;font-size:4px;color:#888;white-space:nowrap;line-height:1;">Home&nbsp;&nbsp;&nbsp;Share&nbsp;&nbsp;&nbsp;View</div><div class="a" style="left:0px;top:13px;width:381px;height:1px;background:#e0e0e0;"></div><div class="a" style="left:27px;top:14px;width:18px;height:5px;background:#e8d890;opacity:.6"></div><div class="a" style="left:45px;top:16px;width:62px;height:1px;background:#aaa;"></div><div class="a" style="left:340px;top:14px;width:41px;height:6px;background:transparent;border-left:1px solid #ddd"></div><div class="a" style="left:6px;top:27px;width:10px;height:2px;background:#5a8ad0;"></div><div class="a" style="left:7px;top:33px;width:3px;height:3px;background:#3a7ad0;"></div><div class="a" style="left:12px;top:33px;width:18px;height:1px;background:#9aa4b4;"></div><div class="a" style="left:7px;top:39px;width:3px;height:3px;background:#3a7ad0;"></div><div class="a" style="left:12px;top:39px;width:18px;height:1px;background:#9aa4b4;"></div><div class="a" style="left:7px;top:46px;width:3px;height:3px;background:#3a7ad0;"></div><div class="a" style="left:12px;top:46px;width:18px;height:1px;background:#9aa4b4;"></div><div class="a" style="left:7px;top:52px;width:3px;height:3px;background:#3a7ad0;"></div><div class="a" style="left:12px;top:52px;width:18px;height:1px;background:#9aa4b4;"></div><div class="a" style="left:7px;top:60px;width:3px;height:3px;background:#3a7ad0;"></div><div class="a" style="left:12px;top:60px;width:18px;height:1px;background:#9aa4b4;"></div><div class="a" style="left:7px;top:67px;width:3px;height:3px;background:#3a7ad0;"></div><div class="a" style="left:12px;top:67px;width:18px;height:1px;background:#9aa4b4;"></div><div class="a" style="left:7px;top:73px;width:3px;height:3px;background:#3a7ad0;"></div><div class="a" style="left:12px;top:73px;width:18px;height:1px;background:#9aa4b4;"></div><div class="a" style="left:7px;top:79px;width:3px;height:3px;background:#3a7ad0;"></div><div class="a" style="left:12px;top:79px;width:18px;height:1px;background:#9aa4b4;"></div><div class="a" style="left:7px;top:86px;width:3px;height:3px;background:#3a7ad0;"></div><div class="a" style="left:12px;top:86px;width:18px;height:1px;background:#9aa4b4;"></div><div class="a" style="left:7px;top:92px;width:3px;height:3px;background:#3a7ad0;"></div><div class="a" style="left:12px;top:92px;width:18px;height:1px;background:#9aa4b4;"></div><div class="a" style="left:7px;top:98px;width:3px;height:3px;background:#3a7ad0;"></div><div class="a" style="left:12px;top:98px;width:18px;height:1px;background:#9aa4b4;"></div><div class="a" style="left:7px;top:104px;width:3px;height:3px;background:#3a7ad0;"></div><div class="a" style="left:12px;top:104px;width:18px;height:1px;background:#9aa4b4;"></div><div class="a" style="left:7px;top:110px;width:3px;height:3px;background:#3a7ad0;"></div><div class="a" style="left:12px;top:110px;width:18px;height:1px;background:#9aa4b4;"></div><div class="a" style="left:7px;top:118px;width:3px;height:3px;background:#3a7ad0;"></div><div class="a" style="left:12px;top:118px;width:18px;height:1px;background:#9aa4b4;"></div><div class="a" style="left:0px;top:101px;width:37px;height:6px;background:#d8d8d8;"></div><div class="a" style="left:42px;top:24px;width:8px;height:1px;background:#bbb;"></div><div class="a" style="left:42px;top:30px;width:4px;height:4px;background:#7aa0d0;"></div><div class="a" style="left:47px;top:31px;width:30px;height:1px;background:#7a7a8a;"></div><div class="a" style="left:104px;top:31px;width:24px;height:1px;background:#a8a8a8;"></div><div class="a" style="left:133px;top:31px;width:20px;height:1px;background:#a8a8a8;"></div><div class="a" style="left:42px;top:35px;width:4px;height:4px;background:#7aa0d0;"></div><div class="a" style="left:47px;top:36px;width:30px;height:1px;background:#7a7a8a;"></div><div class="a" style="left:104px;top:36px;width:24px;height:1px;background:#a8a8a8;"></div><div class="a" style="left:133px;top:36px;width:20px;height:1px;background:#a8a8a8;"></div><div class="a" style="left:42px;top:41px;width:4px;height:4px;background:#7aa0d0;"></div><div class="a" style="left:47px;top:42px;width:30px;height:1px;background:#7a7a8a;"></div><div class="a" style="left:104px;top:42px;width:24px;height:1px;background:#a8a8a8;"></div><div class="a" style="left:133px;top:42px;width:20px;height:1px;background:#a8a8a8;"></div><div class="a" style="left:42px;top:47px;width:4px;height:4px;background:#7aa0d0;"></div><div class="a" style="left:47px;top:48px;width:30px;height:1px;background:#7a7a8a;"></div><div class="a" style="left:104px;top:48px;width:24px;height:1px;background:#a8a8a8;"></div><div class="a" style="left:133px;top:48px;width:20px;height:1px;background:#a8a8a8;"></div><div class="a" style="left:42px;top:52px;width:4px;height:4px;background:#7aa0d0;"></div><div class="a" style="left:47px;top:53px;width:30px;height:1px;background:#7a7a8a;"></div><div class="a" style="left:104px;top:53px;width:24px;height:1px;background:#a8a8a8;"></div><div class="a" style="left:133px;top:53px;width:20px;height:1px;background:#a8a8a8;"></div><div class="a" style="left:42px;top:57px;width:4px;height:4px;background:#7aa0d0;"></div><div class="a" style="left:47px;top:58px;width:30px;height:1px;background:#7a7a8a;"></div><div class="a" style="left:104px;top:58px;width:24px;height:1px;background:#a8a8a8;"></div><div class="a" style="left:133px;top:58px;width:20px;height:1px;background:#a8a8a8;"></div><div class="a" style="left:42px;top:63px;width:4px;height:4px;background:#7aa0d0;"></div><div class="a" style="left:47px;top:64px;width:30px;height:1px;background:#7a7a8a;"></div><div class="a" style="left:104px;top:64px;width:24px;height:1px;background:#a8a8a8;"></div><div class="a" style="left:133px;top:64px;width:20px;height:1px;background:#a8a8a8;"></div><div class="a" style="left:165px;top:30px;width:15px;height:1px;background:#a8a8a8;"></div><div class="a" style="left:165px;top:35px;width:12px;height:1px;background:#a8a8a8;"></div><div class="a" style="left:137px;top:39px;width:107px;height:74px;background:#fdfdfd;border-left:1px solid #90c0f0;border-bottom:1px solid #90c0f0;border-top:1px solid #e8eef4;border-right:1px solid #e8eef4"></div><div class="a" style="left:141px;top:43px;width:20px;height:1px;background:#666;"></div><div class="a" style="left:230px;top:42px;width:5px;height:5px;background:transparent;border:1px solid #444"></div><div class="a" style="left:143px;top:51px;width:80px;height:1px;background:#8a98b0;"></div><div class="a" style="left:143px;top:56px;width:25px;height:1px;background:#555;"></div><div class="a" style="left:143px;top:62px;width:94px;height:20px;background:#fbfbfb;background-image:repeating-linear-gradient(90deg,#d8e8e0 0 1px,transparent 1px 9px),repeating-linear-gradient(0deg,#d8e8e0 0 1px,transparent 1px 10px)"></div><div class="a" style="left:143px;top:62px;width:94px;height:20px;background:transparent;border:1px solid #ccc"></div><div class="a" style="left:143px;top:87px;width:40px;height:1px;background:#888;"></div><div class="a" style="left:143px;top:90px;width:40px;height:1px;background:#888;"></div><div class="a" style="left:143px;top:93px;width:40px;height:1px;background:#888;"></div><div class="a" style="left:137px;top:101px;width:107px;height:1px;background:#e8e8e8;"></div><div class="a" style="left:143px;top:104px;width:5px;height:5px;background:transparent;border:1px solid #ccc;border-radius:50%"></div><div class="a" style="left:173px;top:148px;width:2px;height:4px;background:#333;"></div><div class="a" style="left:0px;top:219px;width:381px;height:10px;background:#101010;"></div><div class="a" style="left:9px;top:221px;width:50px;height:6px;background:#282828;"></div><div class="band"></div><div class="lab u">lepide</div><div class="lab ip">192.168.10.203</div></div>
<div class="tile" style="left:796px;top:592px;background:#0a1a30"><div class="a" style="left:0px;top:0px;width:381px;height:229px;background:#0a1a30;background:linear-gradient(160deg,#0a1d36 0%,#0c2342 45%,#081830 70%,#06101e 100%)"></div><div class="a" style="left:0px;top:0px;width:381px;height:229px;background:transparent;background:linear-gradient(172deg,transparent 20%,rgba(40,90,150,.22) 38%,transparent 55%)"></div><div class="a" style="left:8px;top:3px;width:12px;height:11px;background:#9aa0a8;"></div><div class="a" style="left:38px;top:3px;width:12px;height:11px;background:#b8a048;"></div><div class="a" style="left:68px;top:3px;width:12px;height:11px;background:#b8a048;"></div><div class="a" style="left:97px;top:3px;width:12px;height:11px;background:#b8a048;"></div><div class="a" style="left:127px;top:3px;width:12px;height:11px;background:#b8a048;"></div><div class="a" style="left:8px;top:34px;width:12px;height:11px;background:#b8a048;"></div><div class="a" style="left:38px;top:34px;width:12px;height:11px;background:#c0c0c0;"></div><div class="a" style="left:68px;top:34px;width:12px;height:11px;background:#b8a048;"></div><div class="a" style="left:97px;top:34px;width:12px;height:11px;background:#b8a048;"></div><div class="a" style="left:124px;top:34px;width:12px;height:11px;background:#2a6a4a;"></div><div class="a" style="left:8px;top:65px;width:12px;height:11px;background:#b8a048;"></div><div class="a" style="left:38px;top:65px;width:12px;height:11px;background:#b8a048;"></div><div class="a" style="left:2px;top:17px;width:22px;height:2px;background:#6a7080;"></div><div class="a" style="left:32px;top:17px;width:22px;height:2px;background:#6a7080;"></div><div class="a" style="left:62px;top:17px;width:22px;height:2px;background:#6a7080;"></div><div class="a" style="left:91px;top:17px;width:22px;height:2px;background:#6a7080;"></div><div class="a" style="left:121px;top:17px;width:22px;height:2px;background:#6a7080;"></div><div class="a" style="left:2px;top:48px;width:22px;height:2px;background:#6a7080;"></div><div class="a" style="left:32px;top:48px;width:22px;height:2px;background:#6a7080;"></div><div class="a" style="left:62px;top:48px;width:22px;height:2px;background:#6a7080;"></div><div class="a" style="left:91px;top:48px;width:22px;height:2px;background:#6a7080;"></div><div class="a" style="left:2px;top:79px;width:22px;height:2px;background:#6a7080;"></div><div class="a" style="left:32px;top:79px;width:22px;height:2px;background:#6a7080;"></div><div class="a" style="left:129px;top:30px;width:252px;height:188px;background:#8e8e8e;"></div><div class="a" style="left:129px;top:30px;width:252px;height:9px;background:#909090;"></div><div class="a" style="left:133px;top:32px;width:5px;height:4px;background:#6a7a8a;"></div><div class="a" style="left:141px;top:32px;font-size:4.5px;color:#5a5a5a;white-space:nowrap;line-height:1;">Task Manager</div><div class="a" style="left:133px;top:40px;font-size:4.5px;color:#555;white-space:nowrap;line-height:1;">File&nbsp;&nbsp;&nbsp;Options&nbsp;&nbsp;&nbsp;View</div><div class="a" style="left:340px;top:33px;width:4px;height:1px;background:#666;"></div><div class="a" style="left:355px;top:32px;width:4px;height:4px;background:transparent;border:1px solid #777"></div><div class="a" style="left:370px;top:32px;width:4px;height:4px;background:#888;"></div><div class="a" style="left:129px;top:46px;width:252px;height:6px;background:#8a8a8a;border-bottom:1px solid #7a7a7a"></div><div class="a" style="left:131px;top:47px;font-size:4px;color:#222;white-space:nowrap;line-height:1;">Processes&nbsp;&nbsp;Performance&nbsp;&nbsp;&nbsp;Users&nbsp;&nbsp;&nbsp;Details&nbsp;&nbsp;&nbsp;Services</div><div class="a" style="left:130px;top:52px;width:54px;height:166px;background:#8a8a8a;border-right:1px solid #7c7c7c"></div><div class="a" style="left:131px;top:57px;width:51px;height:14px;background:#a2a2a2;"></div><div class="a" style="left:148px;top:58px;font-size:5px;color:#222;white-space:nowrap;line-height:1;">CPU</div><div class="a" style="left:148px;top:65px;font-size:3px;color:#333;white-space:nowrap;line-height:1;">11% 3.09 GHz</div><div class="a" style="left:148px;top:73px;font-size:5px;color:#333;white-space:nowrap;line-height:1;">Memory</div><div class="a" style="left:194px;top:60px;font-size:10px;color:#222;white-space:nowrap;line-height:1;">CPU</div><div class="a" style="left:255px;top:63px;font-size:5px;color:#333;white-space:nowrap;line-height:1;">Intel(R) Core(TM) i5-3340 CPU @ 3.10GHz</div><div class="a" style="left:195px;top:75px;width:176px;height:70px;background:#8e8e8e;background-image:repeating-linear-gradient(90deg,#979797 0 1px,transparent 1px 12px),repeating-linear-gradient(0deg,#979797 0 1px,transparent 1px 10px)"></div><div class="a" style="left:195px;top:75px;width:176px;height:70px;background:transparent;border:1px solid #5a7a9a"></div><div class="a" style="left:196px;top:130px;width:174px;height:14px;background:#8a9aaa;clip-path:polygon(0 60%,5% 30%,10% 70%,15% 20%,20% 60%,25% 30%,30% 70%,35% 10%,40% 50%,45% 20%,50% 60%,55% 10%,60% 60%,65% 20%,70% 70%,75% 0%,80% 50%,85% 20%,90% 70%,95% 20%,100% 50%,100% 100%,0 100%)"></div><div class="a" style="left:195px;top:150px;font-size:7px;color:#222;white-space:nowrap;line-height:1;">11%</div><div class="a" style="left:220px;top:150px;font-size:7px;color:#222;white-space:nowrap;line-height:1;">3.09 GHz</div><div class="a" style="left:195px;top:166px;font-size:7px;color:#222;white-space:nowrap;line-height:1;">74</div><div class="a" style="left:220px;top:166px;font-size:7px;color:#222;white-space:nowrap;line-height:1;">867</div><div class="a" style="left:244px;top:166px;font-size:7px;color:#222;white-space:nowrap;line-height:1;">36453</div><div class="a" style="left:273px;top:147px;width:40px;height:1px;background:#6a6a6a;"></div><div class="a" style="left:273px;top:152px;width:40px;height:1px;background:#6a6a6a;"></div><div class="a" style="left:273px;top:157px;width:40px;height:1px;background:#6a6a6a;"></div><div class="a" style="left:273px;top:162px;width:40px;height:1px;background:#6a6a6a;"></div><div class="a" style="left:195px;top:183px;font-size:7px;color:#222;white-space:nowrap;line-height:1;">26:21:13:18</div><div class="a" style="left:272px;top:185px;font-size:6px;color:#9a9a9a;white-space:nowrap;line-height:1;">Activate Windows</div><div class="a" style="left:58px;top:84px;width:265px;height:49px;background:#0b65ba;"></div><div class="a" style="left:66px;top:89px;font-size:10px;color:#f0f4f8;white-space:nowrap;line-height:1;">Updates are available</div><div class="a" style="left:67px;top:104px;font-size:5px;color:#e8eef4;white-space:nowrap;line-height:1;">Required updates need to be installed.</div><div class="a" style="left:270px;top:116px;width:43px;height:10px;background:transparent;border:1px solid #fff"></div><div class="a" style="left:278px;top:119px;font-size:5px;color:#fff;white-space:nowrap;line-height:1;">Get updates</div><div class="a" style="left:0px;top:218px;width:381px;height:11px;background:#050505;"></div><div class="band"></div><div class="lab u">administrator</div><div class="lab ip">192.168.10.203</div><div class="lab hn">SERVER2016-R2</div><div class="dot"></div></div>
<div class="tile" style="left:1188px;top:592px;width:382px;background:#625c78"><div class="a" style="left:0px;top:0px;width:381px;height:229px;background:#625c78;"></div><div class="a" style="left:5px;top:3px;width:17px;height:10px;background:#b8c0f0;"></div><div class="a" style="left:36px;top:3px;width:11px;height:11px;background:#e8e0c0;"></div><div class="a" style="left:64px;top:3px;width:17px;height:11px;background:#a8b8c8;"></div><div class="a" style="left:93px;top:3px;width:17px;height:11px;background:#e0e0e8;"></div><div class="a" style="left:181px;top:3px;width:12px;height:11px;background:#e8e0c0;"></div><div class="a" style="left:239px;top:3px;width:12px;height:11px;background:#e8e0c0;"></div><div class="a" style="left:5px;top:33px;width:17px;height:12px;background:#a0b0b0;"></div><div class="a" style="left:36px;top:33px;width:11px;height:12px;background:#e8e0c0;"></div><div class="a" style="left:64px;top:33px;width:17px;height:13px;background:#c0c8f0;"></div><div class="a" style="left:96px;top:34px;width:12px;height:12px;background:#e0e0ec;"></div><div class="a" style="left:154px;top:34px;width:12px;height:12px;background:#e0e0ec;"></div><div class="a" style="left:5px;top:64px;width:17px;height:12px;background:#80a8c0;"></div><div class="a" style="left:36px;top:64px;width:11px;height:13px;background:#e8e0c0;"></div><div class="a" style="left:96px;top:65px;width:15px;height:12px;background:#a0b0b8;"></div><div class="a" style="left:8px;top:95px;width:13px;height:12px;background:#c8d0e0;"></div><div class="a" style="left:36px;top:95px;width:11px;height:12px;background:#e8e0c0;"></div><div class="a" style="left:66px;top:95px;width:14px;height:12px;background:#a0b0b8;"></div><div class="a" style="left:96px;top:96px;width:12px;height:12px;background:#e0e0ec;"></div><div class="a" style="left:5px;top:126px;width:17px;height:12px;background:#a0c0e0;"></div><div class="a" style="left:36px;top:126px;width:11px;height:12px;background:#e8e0c0;"></div><div class="a" style="left:66px;top:126px;width:14px;height:12px;background:#a0b0b8;"></div><div class="a" style="left:94px;top:126px;width:16px;height:12px;background:#a0c0e0;"></div><div class="a" style="left:152px;top:125px;width:11px;height:12px;background:#e8e0c0;"></div><div class="a" style="left:7px;top:157px;width:11px;height:12px;background:#e8e0c0;"></div><div class="a" style="left:36px;top:157px;width:11px;height:12px;background:#e8e0c0;"></div><div class="a" style="left:66px;top:157px;width:12px;height:13px;background:#e0e0ec;"></div><div class="a" style="left:123px;top:156px;width:11px;height:13px;background:#e8e0c0;"></div><div class="a" style="left:152px;top:156px;width:11px;height:13px;background:#e8e0c0;"></div><div class="a" style="left:5px;top:188px;width:17px;height:12px;background:#7a72a0;"></div><div class="a" style="left:36px;top:188px;width:11px;height:12px;background:#7a6a80;"></div><div class="a" style="left:66px;top:188px;width:14px;height:12px;background:#708090;"></div><div class="a" style="left:2px;top:17px;width:22px;height:2px;background:#9a96b0;"></div><div class="a" style="left:32px;top:17px;width:22px;height:2px;background:#9a96b0;"></div><div class="a" style="left:62px;top:17px;width:22px;height:2px;background:#9a96b0;"></div><div class="a" style="left:90px;top:17px;width:22px;height:2px;background:#9a96b0;"></div><div class="a" style="left:176px;top:17px;width:22px;height:2px;background:#9a96b0;"></div><div class="a" style="left:234px;top:17px;width:22px;height:2px;background:#9a96b0;"></div><div class="a" style="left:2px;top:48px;width:22px;height:2px;background:#9a96b0;"></div><div class="a" style="left:32px;top:48px;width:22px;height:2px;background:#9a96b0;"></div><div class="a" style="left:62px;top:48px;width:22px;height:2px;background:#9a96b0;"></div><div class="a" style="left:92px;top:48px;width:22px;height:2px;background:#9a96b0;"></div><div class="a" style="left:150px;top:48px;width:22px;height:2px;background:#9a96b0;"></div><div class="a" style="left:2px;top:79px;width:22px;height:2px;background:#9a96b0;"></div><div class="a" style="left:32px;top:79px;width:22px;height:2px;background:#9a96b0;"></div><div class="a" style="left:92px;top:79px;width:22px;height:2px;background:#9a96b0;"></div><div class="a" style="left:2px;top:110px;width:22px;height:2px;background:#9a96b0;"></div><div class="a" style="left:32px;top:110px;width:22px;height:2px;background:#9a96b0;"></div><div class="a" style="left:62px;top:110px;width:22px;height:2px;background:#9a96b0;"></div><div class="a" style="left:92px;top:110px;width:22px;height:2px;background:#9a96b0;"></div><div class="a" style="left:2px;top:141px;width:22px;height:2px;background:#9a96b0;"></div><div class="a" style="left:32px;top:141px;width:22px;height:2px;background:#9a96b0;"></div><div class="a" style="left:62px;top:141px;width:22px;height:2px;background:#9a96b0;"></div><div class="a" style="left:92px;top:141px;width:22px;height:2px;background:#9a96b0;"></div><div class="a" style="left:148px;top:141px;width:22px;height:2px;background:#9a96b0;"></div><div class="a" style="left:2px;top:172px;width:22px;height:2px;background:#9a96b0;"></div><div class="a" style="left:32px;top:172px;width:22px;height:2px;background:#9a96b0;"></div><div class="a" style="left:62px;top:172px;width:22px;height:2px;background:#9a96b0;"></div><div class="a" style="left:119px;top:172px;width:22px;height:2px;background:#9a96b0;"></div><div class="a" style="left:148px;top:172px;width:22px;height:2px;background:#9a96b0;"></div><div class="a" style="left:2px;top:203px;width:22px;height:2px;background:#9a96b0;"></div><div class="a" style="left:32px;top:203px;width:22px;height:2px;background:#9a96b0;"></div><div class="a" style="left:62px;top:203px;width:22px;height:2px;background:#9a96b0;"></div><div class="a" style="left:180px;top:37px;width:201px;height:131px;background:#c6c2d8;border:1px solid #b0acc8"></div><div class="a" style="left:181px;top:38px;width:200px;height:6px;background:#8a94c8;background:linear-gradient(90deg,#7a84c0,#b8bce0)"></div><div class="a" style="left:188px;top:38px;font-size:4.5px;color:#fff;white-space:nowrap;line-height:1;">Windows Task Manager</div><div class="a" style="left:183px;top:46px;font-size:3.5px;color:#555;white-space:nowrap;line-height:1;">File&nbsp;&nbsp;Options&nbsp;&nbsp;View&nbsp;&nbsp;Help</div><div class="a" style="left:185px;top:52px;font-size:3.5px;color:#555;white-space:nowrap;line-height:1;">Applications | Processes | Services | Performance | Networking | Users</div><div class="a" style="left:186px;top:58px;width:192px;height:106px;background:transparent;border:1px solid #dcd8ea"></div><div class="a" style="left:192px;top:64px;width:26px;height:19px;background:#5a5670;"></div><div class="a" style="left:198px;top:66px;width:6px;height:11px;background:#50d060;background-image:repeating-linear-gradient(0deg,#50d060 0 1px,#5a5670 1px 2px)"></div><div class="a" style="left:205px;top:66px;width:6px;height:11px;background:#50d060;background-image:repeating-linear-gradient(0deg,#50d060 0 1px,#5a5670 1px 2px)"></div><div class="a" style="left:231px;top:64px;width:138px;height:19px;background:#5a5670;background-image:repeating-linear-gradient(90deg,#3a8a80 0 1px,transparent 1px 5px),repeating-linear-gradient(0deg,#3a8a80 0 1px,transparent 1px 4px)"></div><div class="a" style="left:231px;top:64px;width:138px;height:10px;background:transparent;background:linear-gradient(180deg,rgba(80,220,90,.35),transparent)"></div><div class="a" style="left:192px;top:92px;width:26px;height:19px;background:#5a5670;"></div><div class="a" style="left:198px;top:94px;width:6px;height:11px;background:#50d060;background-image:repeating-linear-gradient(0deg,#50d060 0 1px,#5a5670 1px 2px)"></div><div class="a" style="left:205px;top:94px;width:6px;height:11px;background:#50d060;background-image:repeating-linear-gradient(0deg,#50d060 0 1px,#5a5670 1px 2px)"></div><div class="a" style="left:231px;top:92px;width:138px;height:19px;background:#5a5670;background-image:repeating-linear-gradient(90deg,#3a8a80 0 1px,transparent 1px 5px),repeating-linear-gradient(0deg,#3a8a80 0 1px,transparent 1px 4px)"></div><div class="a" style="left:231px;top:92px;width:138px;height:1px;background:#4060c0;"></div><div class="a" style="left:192px;top:119px;width:60px;height:1px;background:#8a86a0;"></div><div class="a" style="left:192px;top:123px;width:60px;height:1px;background:#8a86a0;"></div><div class="a" style="left:192px;top:127px;width:60px;height:1px;background:#8a86a0;"></div><div class="a" style="left:192px;top:131px;width:60px;height:1px;background:#8a86a0;"></div><div class="a" style="left:192px;top:135px;width:60px;height:1px;background:#8a86a0;"></div><div class="a" style="left:262px;top:119px;width:60px;height:1px;background:#8a86a0;"></div><div class="a" style="left:262px;top:123px;width:60px;height:1px;background:#8a86a0;"></div><div class="a" style="left:262px;top:127px;width:60px;height:1px;background:#8a86a0;"></div><div class="a" style="left:262px;top:131px;width:60px;height:1px;background:#8a86a0;"></div><div class="a" style="left:262px;top:135px;width:60px;height:1px;background:#8a86a0;"></div><div class="a" style="left:192px;top:141px;width:60px;height:1px;background:#8a86a0;"></div><div class="a" style="left:192px;top:145px;width:60px;height:1px;background:#8a86a0;"></div><div class="a" style="left:192px;top:149px;width:60px;height:1px;background:#8a86a0;"></div><div class="a" style="left:263px;top:148px;width:55px;height:6px;background:#d8d4e8;border:1px solid #8a86a8"></div><div class="a" style="left:180px;top:163px;width:201px;height:5px;background:#bcb8d0;"></div><div class="a" style="left:0px;top:218px;width:381px;height:11px;background:#9a96ae;"></div><div class="a" style="left:108px;top:188px;font-size:19.5px;color:#8a86a0;white-space:nowrap;line-height:1;font-family:'Liberation Sans',sans-serif">Activate Windows</div><div class="a" style="left:108px;top:211px;font-size:14px;color:#7a7690;white-space:nowrap;line-height:1;">Go to Settings to activate Windows.</div><div class="lab u">administrator</div><div class="lab ip">192.168.10.217</div><div class="lab hn">SHEETAL-PC2</div><div class="dot"></div></div>
<div class="a" style="left:796px;top:842px;width:381px;height:14px;overflow:hidden;background:#fbfbfb"><div class="a" style="left:24px;top:0px;width:149px;height:8px;background:#e4e4e4;"></div><div class="a" style="left:39px;top:0px;width:95px;height:7px;background:#2a62b0;clip-path:polygon(0 0,100% 0,96% 100%,4% 100%)"></div><div class="a" style="left:66px;top:2px;width:14px;height:2px;background:#6a90d0;"></div><div class="a" style="left:110px;top:2px;width:14px;height:2px;background:#a0b8e0;"></div><div class="a" style="left:140px;top:9px;width:25px;height:2px;background:#bbb;"></div><div class="a" style="left:50px;top:11px;width:12px;height:1px;background:#9ab;"></div><div class="a" style="left:72px;top:11px;width:12px;height:1px;background:#9ab;"></div><div class="a" style="left:173px;top:0px;width:208px;height:14px;background:#000;"></div><div class="a" style="left:355px;top:3px;width:26px;height:26px;background:transparent;border:3px solid #f00;border-radius:50%"></div><div class="a" style="left:361px;top:9px;width:14px;height:14px;background:#f00;border-radius:50%"></div></div><div class="a" style="left:604px;top:715px;width:216px;height:145px;background:linear-gradient(90deg,rgba(0,0,0,.25) 0%,transparent 12%,transparent 84%,rgba(0,0,0,.5) 100%),linear-gradient(180deg,#555 0%,#555 45%,#4a4a4a 75%,#3c3c3c 100%)"></div><svg class="a" style="left:610px;top:721px" width="20" height="20" viewBox="0 0 20 20"><path d="M2.5 7H10.5V17.8H2.5Z" fill="#000"/><path d="M3 6.5H10.5V17H3Z" fill="#fff"/><path d="M4.5 9.5H9M4.5 11.5H9M4.5 13.5H9" stroke="#888" stroke-width="1"/><path d="M8.5 5.5Q9 2.5 12.5 2.5Q16.5 2.5 16.3 5.5Q16 8 13 9.3V11.5" fill="none" stroke="#000" stroke-width="4"/><path d="M8.5 5.5Q9 2.5 12.5 2.5Q16.5 2.5 16.3 5.5Q16 8 13 9.3V11.5" fill="none" stroke="#f8f000" stroke-width="2.2"/><rect x="10.8" y="13.3" width="4.5" height="3.4" fill="#f8f000" stroke="#000" stroke-width="1"/></svg><div class="a" style="left:636px;top:723px;font-size:12.5px;color:#fff;line-height:16px">Help</div><div class="a" style="left:612px;top:747px;width:200px;height:105px;background:#fff;overflow:hidden"><div class="a" style="left:0px;top:0px;width:200px;height:5px;background:#f0f0f0;border-bottom:1px solid #ddd"></div><div class="a" style="left:2px;top:1px;width:3px;height:3px;background:#aaa;"></div><div class="a" style="left:8px;top:1px;width:3px;height:3px;background:#aaa;"></div><div class="a" style="left:15px;top:1px;width:3px;height:3px;background:#aaa;"></div><div class="a" style="left:21px;top:1px;width:3px;height:3px;background:#aaa;"></div><div class="a" style="left:31px;top:6px;width:1px;height:99px;background:#d0d0d0;"></div><div class="a" style="left:4px;top:8px;width:2px;height:2px;background:#7030a0;"></div><div class="a" style="left:7px;top:8px;width:14px;height:1px;background:#b8b8c4;"></div><div class="a" style="left:10px;top:11px;width:2px;height:2px;background:#a0a0c0;"></div><div class="a" style="left:13px;top:11px;width:18px;height:1px;background:#b8b8c4;"></div><div class="a" style="left:8px;top:14px;width:2px;height:2px;background:#a0a0c0;"></div><div class="a" style="left:11px;top:14px;width:22px;height:1px;background:#b8b8c4;"></div><div class="a" style="left:6px;top:17px;width:2px;height:2px;background:#a0a0c0;"></div><div class="a" style="left:9px;top:17px;width:17px;height:1px;background:#b8b8c4;"></div><div class="a" style="left:4px;top:20px;width:2px;height:2px;background:#a0a0c0;"></div><div class="a" style="left:7px;top:20px;width:21px;height:1px;background:#b8b8c4;"></div><div class="a" style="left:10px;top:23px;width:2px;height:2px;background:#7030a0;"></div><div class="a" style="left:13px;top:23px;width:16px;height:1px;background:#b8b8c4;"></div><div class="a" style="left:8px;top:26px;width:2px;height:2px;background:#a0a0c0;"></div><div class="a" style="left:11px;top:26px;width:20px;height:1px;background:#b8b8c4;"></div><div class="a" style="left:6px;top:29px;width:2px;height:2px;background:#a0a0c0;"></div><div class="a" style="left:9px;top:29px;width:15px;height:1px;background:#b8b8c4;"></div><div class="a" style="left:4px;top:32px;width:2px;height:2px;background:#a0a0c0;"></div><div class="a" style="left:7px;top:32px;width:19px;height:1px;background:#b8b8c4;"></div><div class="a" style="left:10px;top:35px;width:2px;height:2px;background:#a0a0c0;"></div><div class="a" style="left:13px;top:35px;width:14px;height:1px;background:#b8b8c4;"></div><div class="a" style="left:8px;top:38px;width:2px;height:2px;background:#7030a0;"></div><div class="a" style="left:11px;top:38px;width:18px;height:1px;background:#b8b8c4;"></div><div class="a" style="left:6px;top:41px;width:2px;height:2px;background:#a0a0c0;"></div><div class="a" style="left:9px;top:41px;width:22px;height:1px;background:#b8b8c4;"></div><div class="a" style="left:4px;top:44px;width:2px;height:2px;background:#a0a0c0;"></div><div class="a" style="left:7px;top:44px;width:17px;height:1px;background:#b8b8c4;"></div><div class="a" style="left:10px;top:47px;width:2px;height:2px;background:#a0a0c0;"></div><div class="a" style="left:13px;top:47px;width:21px;height:1px;background:#b8b8c4;"></div><div class="a" style="left:8px;top:50px;width:2px;height:2px;background:#a0a0c0;"></div><div class="a" style="left:11px;top:50px;width:16px;height:1px;background:#b8b8c4;"></div><div class="a" style="left:6px;top:53px;width:2px;height:2px;background:#7030a0;"></div><div class="a" style="left:9px;top:53px;width:20px;height:1px;background:#b8b8c4;"></div><div class="a" style="left:4px;top:56px;width:2px;height:2px;background:#a0a0c0;"></div><div class="a" style="left:7px;top:56px;width:15px;height:1px;background:#b8b8c4;"></div><div class="a" style="left:10px;top:59px;width:2px;height:2px;background:#a0a0c0;"></div><div class="a" style="left:13px;top:59px;width:19px;height:1px;background:#b8b8c4;"></div><div class="a" style="left:8px;top:62px;width:2px;height:2px;background:#a0a0c0;"></div><div class="a" style="left:11px;top:62px;width:14px;height:1px;background:#b8b8c4;"></div><div class="a" style="left:6px;top:65px;width:2px;height:2px;background:#a0a0c0;"></div><div class="a" style="left:9px;top:65px;width:18px;height:1px;background:#b8b8c4;"></div><div class="a" style="left:4px;top:68px;width:2px;height:2px;background:#7030a0;"></div><div class="a" style="left:7px;top:68px;width:22px;height:1px;background:#b8b8c4;"></div><div class="a" style="left:10px;top:71px;width:2px;height:2px;background:#a0a0c0;"></div><div class="a" style="left:13px;top:71px;width:17px;height:1px;background:#b8b8c4;"></div><div class="a" style="left:8px;top:74px;width:2px;height:2px;background:#a0a0c0;"></div><div class="a" style="left:11px;top:74px;width:21px;height:1px;background:#b8b8c4;"></div><div class="a" style="left:6px;top:77px;width:2px;height:2px;background:#a0a0c0;"></div><div class="a" style="left:9px;top:77px;width:16px;height:1px;background:#b8b8c4;"></div><div class="a" style="left:4px;top:80px;width:2px;height:2px;background:#a0a0c0;"></div><div class="a" style="left:7px;top:80px;width:20px;height:1px;background:#b8b8c4;"></div><div class="a" style="left:10px;top:83px;width:2px;height:2px;background:#7030a0;"></div><div class="a" style="left:13px;top:83px;width:15px;height:1px;background:#b8b8c4;"></div><div class="a" style="left:8px;top:86px;width:2px;height:2px;background:#a0a0c0;"></div><div class="a" style="left:11px;top:86px;width:19px;height:1px;background:#b8b8c4;"></div><div class="a" style="left:6px;top:89px;width:2px;height:2px;background:#a0a0c0;"></div><div class="a" style="left:9px;top:89px;width:14px;height:1px;background:#b8b8c4;"></div><div class="a" style="left:4px;top:92px;width:2px;height:2px;background:#a0a0c0;"></div><div class="a" style="left:7px;top:92px;width:18px;height:1px;background:#b8b8c4;"></div><div class="a" style="left:10px;top:95px;width:2px;height:2px;background:#a0a0c0;"></div><div class="a" style="left:13px;top:95px;width:22px;height:1px;background:#b8b8c4;"></div><div class="a" style="left:35px;top:6px;width:155px;height:1px;background:#b8b8b8;"></div><div class="a" style="left:35px;top:8px;width:155px;height:1px;background:#c4c4c4;"></div><div class="a" style="left:35px;top:10px;width:155px;height:1px;background:#d0d0d0;"></div><div class="a" style="left:35px;top:14px;width:155px;height:1px;background:#b8b8b8;"></div><div class="a" style="left:35px;top:16px;width:155px;height:1px;background:#c4c4c4;"></div><div class="a" style="left:35px;top:18px;width:155px;height:1px;background:#d0d0d0;"></div><div class="a" style="left:35px;top:21px;width:155px;height:1px;background:#b8b8b8;"></div><div class="a" style="left:35px;top:23px;width:155px;height:1px;background:#d0d0d0;"></div><div class="a" style="left:35px;top:29px;width:12px;height:1px;background:#999;"></div><div class="a" style="left:35px;top:32px;width:155px;height:1px;background:#b8b8b8;"></div><div class="a" style="left:35px;top:34px;width:155px;height:1px;background:#b8b8b8;"></div><div class="a" style="left:35px;top:36px;width:8px;height:1px;background:#888;"></div><div class="a" style="left:35px;top:41px;width:12px;height:1px;background:#999;"></div><div class="a" style="left:35px;top:44px;width:155px;height:1px;background:#c0c0c0;"></div><div class="a" style="left:35px;top:46px;width:155px;height:1px;background:#c0c0c0;"></div><div class="a" style="left:35px;top:48px;width:155px;height:1px;background:#c8c8c8;"></div><div class="a" style="left:35px;top:50px;width:155px;height:1px;background:#b0b0b0;"></div><div class="a" style="left:35px;top:52px;width:155px;height:1px;background:#b0b0b0;"></div><div class="a" style="left:35px;top:54px;width:155px;height:1px;background:#a0a0a0;"></div><div class="a" style="left:35px;top:60px;width:12px;height:1px;background:#888;"></div><div class="a" style="left:35px;top:98px;width:12px;height:1px;background:#999;"></div><div class="a" style="left:35px;top:101px;width:155px;height:1px;background:#c0c0c0;"></div><div class="a" style="left:35px;top:103px;width:155px;height:1px;background:#c8c8c8;"></div><div class="a" style="left:40px;top:67.0px;width:45px;height:1px;background:#8c8cf0;"></div><div class="a" style="left:40px;top:69.5px;width:62px;height:1px;background:#8c8cf0;"></div><div class="a" style="left:40px;top:72.0px;width:79px;height:1px;background:#8c8cf0;"></div><div class="a" style="left:40px;top:74.5px;width:56px;height:1px;background:#8c8cf0;"></div><div class="a" style="left:40px;top:77.0px;width:73px;height:1px;background:#8c8cf0;"></div><div class="a" style="left:40px;top:79.5px;width:50px;height:1px;background:#8c8cf0;"></div><div class="a" style="left:40px;top:82.0px;width:67px;height:1px;background:#8c8cf0;"></div><div class="a" style="left:40px;top:84.5px;width:84px;height:1px;background:#8c8cf0;"></div><div class="a" style="left:40px;top:87.0px;width:61px;height:1px;background:#8c8cf0;"></div><div class="a" style="left:190px;top:8px;width:1px;height:60px;background:#ccc;"></div></div>
<!-- taskbar -->
<div id="taskbar" class="a"></div>
<svg class="a" style="left:15px;top:871px" width="18" height="18" viewBox="0 0 18 18"><path d="M1 3.2L7.3 2.3V8.4H1Z M8.3 2.1L17 0.8V8.4H8.3Z M1 9.4H7.3V15.6L1 14.7Z M8.3 9.4H17V17.2L8.3 15.9Z" fill="#fff"/></svg><div class="a" style="left:48px;top:860px;width:344px;height:40px;background:#f0f0f0"></div><div class="a" style="left:57px;top:869px;width:22px;height:22px;border:2.6px solid #111;border-radius:50%"></div><div class="a" style="left:88px;top:871px;font-size:14.5px;color:#222;white-space:nowrap;line-height:18px">Type here to search</div><svg class="a" style="left:365px;top:871px" width="13" height="18" viewBox="0 0 13 18"><rect x="3.5" y="0.5" width="6" height="11" rx="1" fill="none" stroke="#222" stroke-width="1"/><path d="M1 9.5Q1 14 6.5 14Q12 14 12 9.5M6.5 14V16.5M3.5 16.5H9.5" fill="none" stroke="#222" stroke-width="1"/></svg><svg class="a" style="left:405px;top:872px" width="22" height="16" viewBox="0 0 22 16"><rect x="5.5" y="1.5" width="11" height="13" fill="none" stroke="#fff" stroke-width="1.2"/><path d="M3 3.5H1.5V12.5H3M19 3.5H20.5V12.5H19" fill="none" stroke="#fff" stroke-width="1.2"/></svg><svg class="a" style="left:454px;top:869px" width="26" height="21" viewBox="0 0 26 21"><path d="M1 6.5L13 0.5L25 6.5V20H1Z" fill="#fff"/><path d="M1 7L25 6.5L14 9.5L20 15Z" fill="#000"/></svg><svg class="a" style="left:505px;top:868px" width="23" height="24" viewBox="0 0 23 24"><ellipse cx="12" cy="11.5" rx="9" ry="10.5" fill="#1a82e0"/><path d="M7.3 12Q7.5 6.3 12.6 6.3Q17.6 6.3 17.6 12Z" fill="#000"/><path d="M8.8 14.8H23V19.8Q19.5 20.3 16 19.8Q11 19 8.8 14.8Z" fill="#000"/><path d="M0.8 12.5Q2.5 5.5 9.5 5L8.8 6.6Q4.5 7.3 0.8 12.5Z" fill="#1a82e0"/></svg><svg class="a" style="left:553px;top:870px" width="24" height="20" viewBox="0 0 24 20"><path d="M1 1H8.5L10.5 2.5H22V18.5H1Z" fill="#f5d270"/><path d="M1 3H22V18.5H1Z" fill="#fce38e"/><path d="M5 14.5Q5 11 8 11H16Q19 11 19 14.5V19H15.2V14H8.8V19H5Z" fill="#2fb0f0"/></svg><div class="a" style="left:545px;top:898px;width:40px;height:2px;background:#76b9ed"></div><svg class="a" style="left:601px;top:867px" width="25" height="25" viewBox="0 0 25 25"><path d="M8 7V4.5Q8 1 12.5 1Q17 1 17 4.5V7" fill="none" stroke="#fff" stroke-width="1.4"/><path d="M1 7H24V24H1Z" fill="#fff"/><rect x="7" y="11" width="5" height="5" fill="#f25022"/><rect x="13" y="11" width="5" height="5" fill="#7fba00"/><rect x="7" y="17" width="5" height="5" fill="#00a4ef"/><rect x="13" y="17" width="5" height="5" fill="#ffb900"/></svg><div class="a" style="left:639px;top:860px;width:48px;height:40px;background:#333"></div><div class="a" style="left:639px;top:898px;width:48px;height:2px;background:#76b9ed"></div><div class="a" style="left:688px;top:860px;width:48px;height:40px;background:#1f1f1f"></div><div class="a" style="left:688px;top:898px;width:48px;height:2px;background:#76b9ed"></div><div class="a" style="left:741px;top:898px;width:40px;height:2px;background:#76b9ed"></div><svg class="a" style="left:651px;top:868px" width="24" height="24" viewBox="0 0 24 24"><rect x="0.5" y="0.5" width="23" height="23" fill="#1a1a8a" stroke="#e0e0f4" stroke-width="1"/><rect x="2.5" y="2.5" width="19" height="19" fill="none" stroke="#fff" stroke-width=".8"/><path d="M6 4.8H10.2V10.2L14.6 4.8H19L13.6 10.9L19.2 18.6H14.5L10.9 13.3L10.2 14.1V18.6H6Z" fill="#fff" stroke="#fff" stroke-width=".6" stroke-linejoin="round"/><path d="M13.5 21.5L21.5 13.5M16.5 21.5L21.5 16.5" stroke="#d8b020" stroke-width="1.1"/></svg><svg class="a" style="left:749px;top:868px" width="24" height="24" viewBox="0 0 24 24"><rect x="0.5" y="0.5" width="23" height="23" fill="#1a1a8a" stroke="#e0e0f4" stroke-width="1"/><rect x="2.5" y="2.5" width="19" height="19" fill="none" stroke="#fff" stroke-width=".8"/><path d="M6 4.8H10.2V10.2L14.6 4.8H19L13.6 10.9L19.2 18.6H14.5L10.9 13.3L10.2 14.1V18.6H6Z" fill="#fff" stroke="#fff" stroke-width=".6" stroke-linejoin="round"/><path d="M13.5 21.5L21.5 13.5M16.5 21.5L21.5 16.5" stroke="#d8b020" stroke-width="1.1"/></svg><svg class="a" style="left:702px;top:868px" width="22" height="24" viewBox="0 0 22 24"><path d="M2 9H11V21.5H2Z" fill="#e8e8e8"/><path d="M3.5 12.5H9.5M3.5 15H9.5M3.5 17.5H9.5" stroke="#888" stroke-width="1.2"/><path d="M10 5Q10.5 2 14 2Q18 2 18 5Q18 7.5 15 9V12" fill="none" stroke="#000" stroke-width="3.8"/><path d="M10 5Q10.5 2 14 2Q18 2 18 5Q18 7.5 15 9V12" fill="none" stroke="#f4ec00" stroke-width="2.4"/><rect x="12.8" y="13.3" width="4.4" height="3.2" fill="#f4ec00" stroke="#000" stroke-width=".8"/></svg><svg class="a" style="left:1403px;top:871px" width="16" height="17" viewBox="0 0 16 17"><circle cx="10.5" cy="3.8" r="2.6" fill="none" stroke="#fff" stroke-width="1.1"/><path d="M6.5 10.5Q7.5 7 10.5 7Q14 7 15 10.5" fill="none" stroke="#fff" stroke-width="1.1"/><circle cx="5" cy="8.8" r="2.6" fill="none" stroke="#fff" stroke-width="1.1"/><path d="M0.8 16Q1.8 12.2 5 12.2Q8.2 12.2 9.2 16" fill="none" stroke="#fff" stroke-width="1.1"/></svg><svg class="a" style="left:1438px;top:873px" width="18" height="16" viewBox="0 0 18 16"><rect x="4.5" y="1.5" width="12" height="9" fill="none" stroke="#fff" stroke-width="1.1"/><path d="M10.5 10.5V13.5M7 13.5H14" stroke="#fff" stroke-width="1.1"/><rect x="0.5" y="0.5" width="5" height="4" fill="#000" stroke="#fff" stroke-width="1"/><path d="M3 4.5V15" stroke="#fff" stroke-width="1"/></svg><svg class="a" style="left:1462px;top:872px" width="18" height="16" viewBox="0 0 18 16"><path d="M1 5.5H4L8 2V14L4 10.5H1Z" fill="none" stroke="#fff" stroke-width="1.1"/><path d="M10.5 5.5Q12 8 10.5 10.5M12.8 3.5Q15.3 8 12.8 12.5M15 1.5Q18.5 8 15 14.5" fill="none" stroke="#fff" stroke-width="1.1"/></svg><div class="a" style="left:1491px;top:864px;font-size:11.2px;color:#fff;line-height:14px;white-space:nowrap">12:39 PM</div><div class="a" style="left:1489px;top:882px;font-size:11.8px;color:#fff;line-height:14px;white-space:nowrap">3/19/2018</div><svg class="a" style="left:1558px;top:871px" width="26" height="25" viewBox="0 0 26 25"><path d="M1 1H17V12H9L5 16V12H1Z" fill="#fff"/><path d="M3.5 4H14.5M3.5 6.5H14.5M3.5 9H11" stroke="#000" stroke-width="1"/><circle cx="17" cy="16" r="7.5" fill="#2a2a2a" stroke="#6a6a6a" stroke-width="1"/><text x="17" y="20.5" text-anchor="middle" font-family="Liberation Sans" font-size="12" fill="#fff">1</text></svg><div class="a" style="left:1595px;top:860px;width:1px;height:40px;background:#444"></div>
</body></html>
